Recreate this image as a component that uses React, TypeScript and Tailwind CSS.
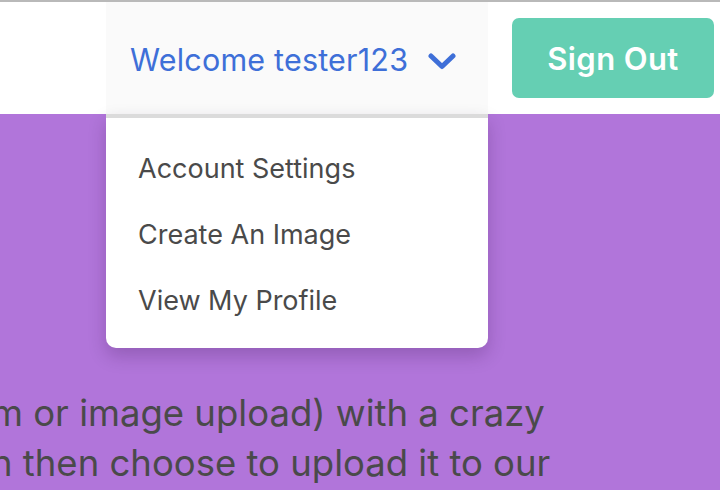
import { useState } from "react";

const menuItems = ["Account Settings", "Create An Image", "View My Profile"];

function Chevron() {
  return (
    <svg width="28" height="17" viewBox="0 0 28 17" className="ml-5 mt-[2px]">
      <polyline
        points="3,3 14,13.5 25,3"
        fill="none"
        stroke="#3e6fd8"
        strokeWidth="5"
        strokeLinecap="round"
        strokeLinejoin="round"
      />
    </svg>
  );
}

export default function App() {
  const [open] = useState(true);

  return (
    <div
      className="w-[720px] h-[490px] overflow-hidden bg-[#b175da] flex flex-col"
      style={{ fontFamily: "Inter, 'Noto Sans', sans-serif" }}
    >
      {/* navbar */}
      <div className="h-[114px] shrink-0 bg-white border-t-2 border-[#b9b9b9] flex items-stretch justify-end relative z-10">
        <div className="relative w-[382px] bg-[#fafafa] flex items-center pl-6 pt-[4px]">
          <span className="text-[30.5px] text-[#3e6fd8] tracking-[0.2px]">
            Welcome tester123
          </span>
          <Chevron />

          {open && (
            <div className="absolute left-0 top-full w-full bg-white border-t-4 border-[#dbdbdb] rounded-b-[10px] shadow-[0_8px_18px_rgba(40,10,60,0.22)] pt-[18px] pb-[14px]">
              {menuItems.map((item) => (
                <div
                  key={item}
                  className="h-[66px] flex items-center pl-8 text-[27px] text-[#4a4a4a]"
                >
                  {item}
                </div>
              ))}
            </div>
          )}
        </div>

        <div className="flex items-center pl-6 pr-[6px]">
          <button className="w-[202px] h-[80px] rounded-[7px] bg-[#65cfb3] text-white text-[31px] font-semibold tracking-[0.4px] pt-[2px]">
            Sign Out
          </button>
        </div>
      </div>

      {/* page body */}
      <div className="pt-[274px] text-[36.5px] leading-[50px] text-[#4a4a4a] whitespace-nowrap">
        <p className="ml-[-9px]">m or image upload) with a crazy</p>
        <p className="ml-[-9px]">n then choose to upload it to our</p>
      </div>
    </div>
  );
}
